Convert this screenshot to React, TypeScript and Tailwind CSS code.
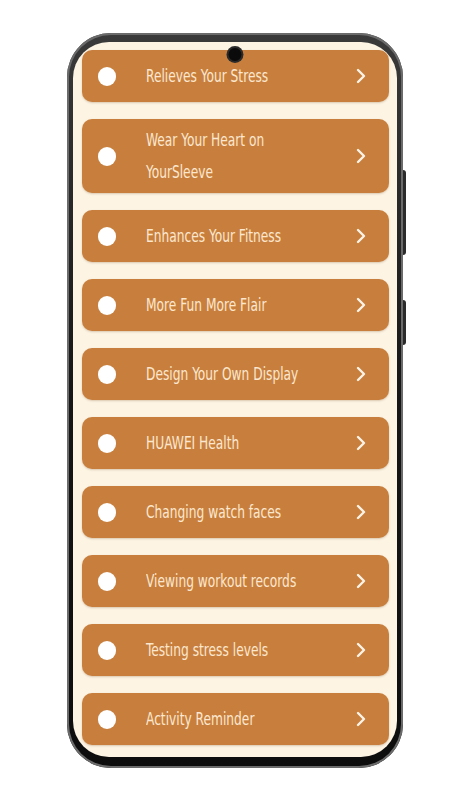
import React from 'react';

const items = [
  'Relieves Your Stress',
  'Wear Your Heart on YourSleeve',
  'Enhances Your Fitness',
  'More Fun More Flair',
  'Design Your Own Display',
  'HUAWEI Health',
  'Changing watch faces',
  'Viewing workout records',
  'Testing stress levels',
  'Activity Reminder',
];

const Chevron = () => (
  <svg width="12" height="16" viewBox="0 0 12 16" fill="none">
    <path d="M3 2l6 6-6 6" stroke="#fdf3e6" strokeWidth="2.4" strokeLinecap="round" strokeLinejoin="round" />
  </svg>
);

const App = () => {
  return (
    <div className="min-h-[800px] bg-white flex justify-center pt-[33px]" style={{ fontFamily: '"DejaVu Sans Condensed", "Liberation Sans", sans-serif' }}>
      <div className="relative">
        {/* side buttons */}
        <div className="absolute right-[-3px] top-[137px] w-[3px] h-[85px] rounded-r bg-[#2b2b2b]" />
        <div className="absolute right-[-3px] top-[267px] w-[3px] h-[45px] rounded-r bg-[#2b2b2b]" />

        <div className="w-[336px] h-[735px] rounded-[44px] bg-gradient-to-b from-[#3a3a3a] via-[#161616] to-[#0d0d0d] p-[6px] pt-[9px] pb-[11px] shadow-[inset_0_0_0_2px_#6b6b6b]">
          <div className="relative h-full rounded-[36px] bg-[#fdf4e4] overflow-hidden pl-[9px] pr-[8px] pt-[8px]">
            <div className="absolute left-1/2 top-[6px] -translate-x-1/2 w-[13px] h-[13px] rounded-full bg-[#0b0b0b] ring-2 ring-[#2a2a2a] z-10" />
            <div className="flex flex-col gap-[17px]">
              {items.map((item, i) => (
                <div
                  key={i}
                  className="flex items-center min-h-[52px] rounded-[10px] bg-[#c87f3d] py-[5px] shadow-[0_1px_2px_rgba(120,70,20,0.25)]"
                >
                  <span className="ml-[16px] w-[18px] h-[19px] rounded-full bg-white shrink-0" />
                  <span className="ml-[30px] w-[160px] overflow-visible">
                    <span className="inline-block w-[206px] origin-left scale-x-[0.8] text-[17px] leading-[32px] text-[#fbe7cf]">
                      {item}
                    </span>
                  </span>
                  <span className="ml-auto mr-[22px] flex">
                    <Chevron />
                  </span>
                </div>
              ))}
            </div>
          </div>
        </div>
      </div>
    </div>
  );
};

export default App;
